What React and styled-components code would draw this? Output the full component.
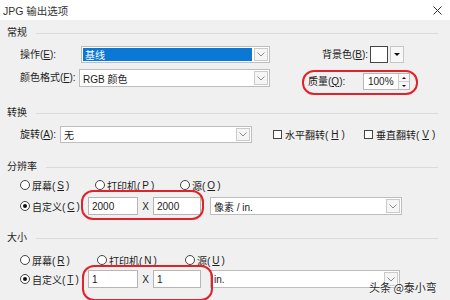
import React from "react";
import styled, { createGlobalStyle } from "styled-components";

const Global = createGlobalStyle`
  html, body { margin: 0; padding: 0; background: #f0f0f0; }
  body { font-family: "Liberation Sans", "Noto Sans CJK SC", sans-serif; }
`;

const Window = styled.div`
  position: relative;
  width: 450px;
  height: 300px;
  overflow: hidden;
  background: #f0f0f0;
  color: #1c1c1c;
  font-size: 10px;
  font-family: "Liberation Sans", "Noto Sans CJK SC", sans-serif;
`;

const TitleBar = styled.div`
  height: 20px;
  background: #fff;
  display: flex;
  align-items: center;
  justify-content: space-between;
  padding: 0 8px 0 3px;
  box-sizing: border-box;
  font-size: 10.5px;
  color: #333;
`;

const Body = styled.div`
  padding: 0 12px 0 7px;
`;

const GroupHeader = styled.div`
  display: flex;
  align-items: center;
  gap: 9px;
  height: 12px;
  margin-top: ${(p) => p.$mt}px;
`;

const GroupLabel = styled.span`
  font-size: 10px;
  line-height: 12px;
  white-space: nowrap;
`;

const Rule = styled.div`
  flex: 1;
  height: 1px;
  background: #dadada;
`;

const Row = styled.div`
  display: flex;
  align-items: ${(p) => p.$align || "center"};
  height: ${(p) => p.$h}px;
  margin-top: ${(p) => p.$mt}px;
  padding-left: 13px;
`;

const Label = styled.span`
  flex: none;
  width: ${(p) => (p.$w ? `${p.$w}px` : "auto")};
  margin-left: ${(p) => p.$ml || 0}px;
  margin-top: ${(p) => p.$mt || 0}px;
  white-space: nowrap;
  line-height: 12px;
`;

const Combo = styled.div`
  flex: none;
  display: flex;
  width: ${(p) => p.$w}px;
  height: ${(p) => p.$h || 17}px;
  margin-left: ${(p) => p.$ml || 0}px;
  box-sizing: border-box;
  border: 1px solid #bdbdbd;
  background: #fff;
  padding: 1px;
  gap: 2px;
`;

const ComboField = styled.div`
  flex: 1;
  display: flex;
  align-items: center;
  padding-left: 2px;
  background: ${(p) => (p.$selected ? "#0b78d6" : "transparent")};
  color: ${(p) => (p.$selected ? "#fff" : "#1c1c1c")};
  white-space: nowrap;
`;

const ArrowBtn = styled.div`
  width: 14px;
  flex: none;
  box-sizing: border-box;
  border: 1px solid #cacaca;
  background: #f5f5f5;
  display: flex;
  align-items: center;
  justify-content: center;
`;

const ColorGroup = styled.div`
  display: flex;
  align-items: center;
  margin-left: ${(p) => p.$ml}px;
  margin-top: ${(p) => p.$mt || 0}px;
  gap: 2px;
`;

const Swatch = styled.div`
  width: 18px;
  height: 17px;
  box-sizing: border-box;
  border: 1px solid #444;
  background: #fff;
`;

const SwatchArrow = styled.div`
  width: 14px;
  height: 17px;
  box-sizing: border-box;
  border: 1px solid #c6c6c6;
  background: #f7f7f7;
  display: flex;
  align-items: center;
  justify-content: center;
`;

const Spin = styled.div`
  display: flex;
  width: 47px;
  height: 17px;
  box-sizing: border-box;
  border: 1px solid #b8b8b8;
  background: #fff;
`;

const SpinValue = styled.div`
  flex: 1;
  display: flex;
  align-items: center;
  padding-left: 4px;
`;

const SpinBtns = styled.div`
  width: 10px;
  display: flex;
  flex-direction: column;
  border-left: 1px solid #cfcfcf;
  background: #f7f7f7;
`;

const SpinHalf = styled.div`
  flex: 1;
  display: flex;
  align-items: center;
  justify-content: center;
  border-top: ${(p) => (p.$bottom ? "1px solid #cfcfcf" : "none")};
`;

const CheckItem = styled.label`
  flex: none;
  display: flex;
  align-items: center;
  gap: 3px;
  width: ${(p) => p.$w}px;
  margin-left: ${(p) => p.$ml || 0}px;
  white-space: nowrap;
`;

const CheckBox = styled.span`
  width: 9px;
  height: 9px;
  box-sizing: border-box;
  border: 1px solid #444;
  background: #fff;
`;

const RadioItem = styled.label`
  flex: none;
  display: flex;
  align-items: center;
  gap: 2px;
  width: ${(p) => (p.$w ? `${p.$w}px` : "auto")};
  white-space: nowrap;
`;

const RadioDot = styled.span`
  width: 10px;
  height: 10px;
  box-sizing: border-box;
  border-radius: 50%;
  border: 1px solid #444;
  background: #fff;
  display: flex;
  align-items: center;
  justify-content: center;
  &::after {
    content: "";
    width: 4px;
    height: 4px;
    border-radius: 50%;
    background: ${(p) => (p.$on ? "#111" : "transparent")};
  }
`;

const TextBox = styled.div`
  flex: none;
  width: ${(p) => p.$w}px;
  height: 18px;
  box-sizing: border-box;
  border: 1px solid #b6b6b6;
  background: #fff;
  display: flex;
  align-items: center;
  padding-left: 3px;
`;

const Times = styled.span`
  flex: none;
  width: 15px;
  text-align: center;
`;

const Oval = styled.div`
  position: absolute;
  left: ${(p) => p.$x}px;
  top: ${(p) => p.$y}px;
  width: ${(p) => p.$w}px;
  height: ${(p) => p.$h}px;
  box-sizing: border-box;
  border: 2.5px solid #e1222b;
  border-radius: 12px;
`;

const Watermark = styled.div`
  position: absolute;
  left: 369px;
  top: 279px;
  font-size: 11px;
  color: #2a2a2a;
  text-shadow: 0 0 2px #fff, 0 0 2px #fff;
  font-family: "Noto Sans CJK SC", sans-serif;
`;

const Chevron = () => (
  <svg width="8" height="5" viewBox="0 0 8 5">
    <polyline points="0.5,0.5 4,4 7.5,0.5" fill="none" stroke="#8a8a8a" strokeWidth="1" />
  </svg>
);

const TriDown = ({ size = 6 }) => (
  <svg width={size} height={size / 2} viewBox="0 0 6 3">
    <polygon points="0,0 6,0 3,3" fill="#111" />
  </svg>
);

const TriUp = () => (
  <svg width="4" height="2" viewBox="0 0 6 3">
    <polygon points="0,3 6,3 3,0" fill="#111" />
  </svg>
);

const CloseIcon = () => (
  <svg width="9" height="9" viewBox="0 0 9 9">
    <path d="M0.5 0.5 L8.5 8.5 M8.5 0.5 L0.5 8.5" stroke="#333" strokeWidth="1" />
  </svg>
);

const K = ({ c }) => (
  <>
    (<u>{c}</u>)
  </>
);

const Group = ({ label, mt }) => (
  <GroupHeader $mt={mt}>
    <GroupLabel>{label}</GroupLabel>
    <Rule />
  </GroupHeader>
);

const ComboBox = ({ w, ml, h, selected, children }) => (
  <Combo $w={w} $ml={ml} $h={h}>
    <ComboField $selected={selected}>{children}</ComboField>
    <ArrowBtn>
      <Chevron />
    </ArrowBtn>
  </Combo>
);

const Radio = ({ on, w, children }) => (
  <RadioItem $w={w}>
    <RadioDot $on={on} />
    {children}
  </RadioItem>
);

export default function App() {
  return (
    <>
      <Global />
      <Window>
        <TitleBar>
          <span>JPG 输出选项</span>
          <CloseIcon />
        </TitleBar>
        <Body>
          <Group label="常规" mt={7} />
          <Row $h={17} $mt={7}>
            <Label $w={61}>
              操作<K c="E" />:
            </Label>
            <ComboBox w={189} selected>
              基线
            </ComboBox>
            <ColorGroup $ml={52}>
              <Label>
                背景色<K c="B" />:
              </Label>
              <Swatch />
              <SwatchArrow>
                <TriDown />
              </SwatchArrow>
            </ColorGroup>
          </Row>
          <Row $h={18} $mt={6} $align="flex-start">
            <Label $w={59} $mt={3}>
              颜色格式<K c="F" />:
            </Label>
            <ComboBox w={191} h={18}>
              RGB 颜色
            </ComboBox>
            <ColorGroup $ml={38} $mt={4}>
              <Label $w={53}>
                质量<K c="Q" />:
              </Label>
              <Spin>
                <SpinValue>100%</SpinValue>
                <SpinBtns>
                  <SpinHalf>
                    <TriUp />
                  </SpinHalf>
                  <SpinHalf $bottom>
                    <svg width="4" height="2" viewBox="0 0 6 3">
                      <polygon points="0,0 6,0 3,3" fill="#111" />
                    </svg>
                  </SpinHalf>
                </SpinBtns>
              </Spin>
            </ColorGroup>
          </Row>

          <Group label="转换" mt={20} />
          <Row $h={17} $mt={7}>
            <Label $w={40}>
              旋转<K c="A" />:
            </Label>
            <ComboBox w={192}>无</ComboBox>
            <CheckItem $w={91} $ml={21}>
              <CheckBox />
              水平翻转<K c="H" />
            </CheckItem>
            <CheckItem $w={80}>
              <CheckBox />
              垂直翻转<K c="V" />
            </CheckItem>
          </Row>

          <Group label="分辨率" mt={18} />
          <Row $h={14} $mt={5}>
            <Radio w={75}>
              屏幕<K c="S" />
            </Radio>
            <Radio w={85}>
              打印机<K c="P" />
            </Radio>
            <Radio>
              源<K c="O" />
            </Radio>
          </Row>
          <Row $h={18} $mt={5}>
            <Radio on w={68}>
              自定义<K c="C" />
            </Radio>
            <TextBox $w={50}>2000</TextBox>
            <Times>X</Times>
            <TextBox $w={48}>2000</TextBox>
            <ComboBox w={192} ml={9} h={18}>
              像素 / in.
            </ComboBox>
          </Row>

          <Group label="大小" mt={17} />
          <Row $h={14} $mt={9}>
            <Radio w={77}>
              屏幕<K c="R" />
            </Radio>
            <Radio w={88}>
              打印机<K c="N" />
            </Radio>
            <Radio>
              源<K c="U" />
            </Radio>
          </Row>
          <Row $h={18} $mt={3}>
            <Radio on w={68}>
              自定义<K c="T" />
            </Radio>
            <TextBox $w={50}>1</TextBox>
            <Times>X</Times>
            <TextBox $w={48}>1</TextBox>
            <ComboBox w={190} ml={9} h={18}>
              in.
            </ComboBox>
          </Row>
        </Body>

        <Oval $x={302} $y={70} $w={116} $h={25} />
        <Oval $x={81} $y={190} $w={123} $h={30} />
        <Oval $x={82} $y={265} $w={131} $h={36} />
        <Watermark>头条 @泰小弯</Watermark>
      </Window>
    </>
  );
}
